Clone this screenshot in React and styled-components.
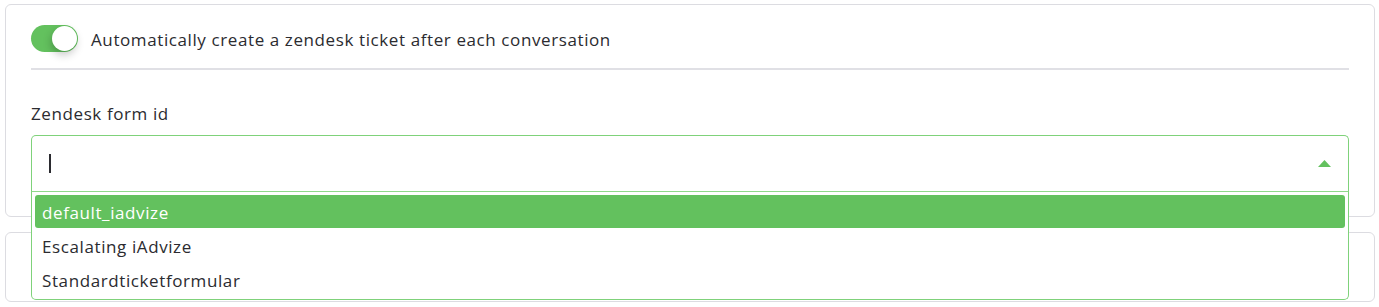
import React from "react";
import styled, { createGlobalStyle } from "styled-components";

const Global = createGlobalStyle`
  html, body { margin: 0; padding: 0; background: #ffffff; }
  body { font-family: "Open Sans", Lato, sans-serif; color: #2b2b30; }
  * { box-sizing: border-box; }
`;

const Page = styled.div`
  padding: 4px 4px 0 5px;
  display: flex;
  flex-direction: column;
  gap: 15px;
  height: 307px;
  overflow: hidden;
`;

const Card = styled.div`
  border: 1px solid #dcdce1;
  border-radius: 6px;
  padding: 0 25px;
  height: ${(p) => p.$h}px;
  position: relative;
  background: #fff;
`;

const ToggleRow = styled.div`
  display: flex;
  align-items: center;
  gap: 13px;
  height: 65px;
  padding-top: 3px;
  border-bottom: 2px solid #e0e0e5;
`;

const Track = styled.div`
  width: 47px;
  height: 27px;
  border-radius: 14px;
  background: #63c15e;
  position: relative;
  flex: none;
`;

const Knob = styled.div`
  position: absolute;
  right: 1px;
  top: 1px;
  width: 25px;
  height: 25px;
  border-radius: 50%;
  background: #fff;
  box-shadow: -1px 4px 8px rgba(0, 0, 0, 0.22);
`;

const Text = styled.span`
  font-size: 17px;
  letter-spacing: 0.6px;
  color: #2b2b30;
  padding-top: 3px;
`;

const Label = styled.div`
  margin-top: 33px;
  font-size: 17px;
  letter-spacing: 0.6px;
  color: #2b2b30;
  height: 22px;
  line-height: 22px;
`;

const SelectWrap = styled.div`
  position: relative;
  margin-top: 10px;
  z-index: 2;
`;

const Control = styled.div`
  height: 57px;
  border: 1px solid #7fd27a;
  border-bottom-color: #8fd88a;
  border-radius: 5px 5px 0 0;
  display: flex;
  align-items: center;
  padding: 0 17px;
  justify-content: space-between;
  background: #fff;
`;

const Caret = styled.span`
  width: 1.5px;
  height: 19px;
  background: #2b2b30;
`;

const Arrow = styled.svg`
  width: 13px;
  height: 7px;
`;

const Menu = styled.div`
  position: absolute;
  left: 0;
  right: 0;
  top: 57px;
  border: 1px solid #7fd27a;
  border-top: none;
  border-radius: 0 0 5px 5px;
  background: #fff;
  padding: 3px 3px 3px 3px;
  display: flex;
  flex-direction: column;
  gap: 1px;
`;

const Option = styled.div`
  height: 33px;
  display: flex;
  align-items: center;
  padding: 1px 7px 0;
  font-size: 17px;
  letter-spacing: 0.6px;
  border-radius: 3px;
  color: ${(p) => (p.$active ? "#ffffff" : "#2b2b30")};
  background: ${(p) => (p.$active ? "#63c15e" : "transparent")};
`;

export default function App() {
  return (
    <>
      <Global />
      <Page>
        <Card $h={213}>
          <ToggleRow>
            <Track>
              <Knob />
            </Track>
            <Text>Automatically create a zendesk ticket after each conversation</Text>
          </ToggleRow>
          <Label>Zendesk form id</Label>
          <SelectWrap>
            <Control>
              <Caret />
              <Arrow viewBox="0 0 13 7">
                <path d="M6.5 0 L13 7 L0 7 Z" fill="#63c15e" />
              </Arrow>
            </Control>
            <Menu>
              <Option $active>default_iadvize</Option>
              <Option>Escalating iAdvize</Option>
              <Option>Standardticketformular</Option>
            </Menu>
          </SelectWrap>
        </Card>
        <Card $h={70} />
      </Page>
    </>
  );
}
